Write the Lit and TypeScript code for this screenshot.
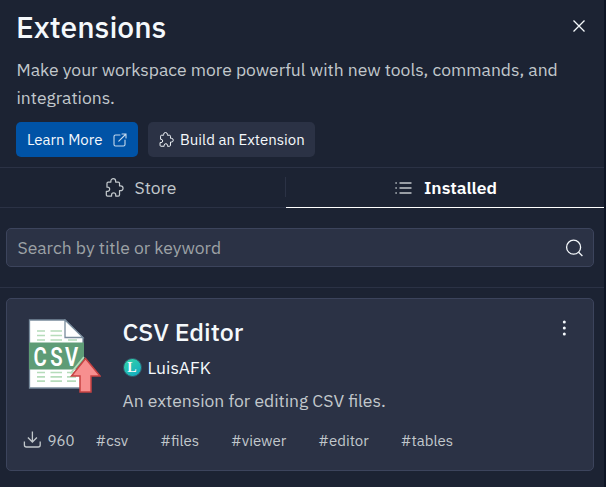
import { LitElement, html, css } from "lit";
import { customElement } from "lit/decorators.js";

const puzzle = (size: number) => html`<svg width=${size} height=${size} viewBox="0 0 20 20" fill="none" stroke="currentColor" stroke-width="1.3" stroke-linejoin="round">
  <path d="M3.400 4.300H6.200V3.200A2.500 2.500 0 0 1 11.200 3.200V4.300H14Q15.300 4.300 15.300 5.600V8.400H16.500A2.500 2.500 0 0 1 16.500 13.400H15.300V17.700Q15.300 19 14 19H11.300V17.800A2.200 2.200 0 0 0 6.900 17.800V19H2.700Q1.400 19 1.400 17.700V14.100H2.700A2.200 2.200 0 0 0 2.700 9.700H2.100V5.600Q2.100 4.300 3.400 4.300Z"/></svg>`;

@customElement("app-root")
export class AppRoot extends LitElement {
  static styles = css`
    :host { display: block; width: 606px; height: 487px; overflow: hidden; background: #0e1525; color: #f5f9fc;
      font-family: "IBM Plex Sans", Roboto, "Liberation Sans", sans-serif; }
    * { box-sizing: border-box; }
    svg { display: block; flex: none; }
    .panel { width: 604px; height: 487px; background: #1c2333; display: flex; flex-direction: column; }
    header { height: 167px; padding: 9px 16px 0; }
    .top { display: flex; justify-content: space-between; height: 47px; }
    h1 { margin: -1px 0 0; font-size: 30px; line-height: 38px; font-weight: 500; }
    .close { margin: 10px 2px 0 0; }
    .intro { margin: 0; padding-left: 0.500px; font-size: 17.500px; line-height: 28px; color: #c2c8cc; white-space: nowrap; }
    .actions { display: flex; gap: 10px; margin-top: 10px; }
    .btn { display: flex; align-items: center; height: 35px; border-radius: 5px; font-size: 15px; white-space: nowrap; padding: 0 11px; }
    .primary { width: 122px; background: #0053a6; justify-content: space-between; }
    .secondary { width: 167px; background: #2b3245; gap: 6px; }
    .btn span { position: relative; top: -0.500px; }
    .tabs { display: flex; height: 41px; border-top: 1px solid #2b3245; font-size: 17.500px; }
    .tab { display: flex; align-items: center; justify-content: center; gap: 11px; color: #c2c8cc; border-bottom: 1px solid #2b3245; }
    .store { width: 286px; padding-right: 5px; position: relative; }
    .store::after { content: ""; position: absolute; right: 0; top: 9px; width: 1px; height: 20px; background: #2b3245; }
    .installed { flex: 1; gap: 12px; padding-left: 2px; border-bottom-color: #fff; }
    .installed span { color: #fff; font-weight: 600; }
    .search-row { height: 80px; padding: 20px 10px 0 6px; border-bottom: 1px solid #2b3245; }
    .search { height: 39px; border: 1px solid #3c445c; border-radius: 5px; background: #2b3245; padding: 0 10px;
      display: flex; align-items: center; justify-content: space-between; font-size: 17.500px; }
    .search span { color: #9da2a6; padding-left: 0.500px; }
    .card { margin: 10px 10px 0 6px; height: 173px; border: 1px solid #3c445c; border-radius: 5px; background: #2b3245; padding: 20px 25px 0 16px; }
    .main { display: flex; height: 104px; }
    .file { margin-left: 5px; }
    .info { flex: 1; margin-left: 21.500px; }
    h2 { margin: -2px 0 0; font-size: 25px; line-height: 30px; font-weight: 500; }
    .author { display: flex; align-items: center; gap: 6px; height: 24px; margin-top: 8px; font-size: 17.500px; }
    .avatar { width: 19px; height: 19px; border-radius: 50%; background: linear-gradient(145deg, #35d6a5, #10a8c4); border: 1px solid #33606f;
      font: 700 14px/17px "Liberation Serif", serif; text-align: center; }
    .desc { margin: 8px 0 0; font-size: 17.500px; line-height: 28px; color: #c2c8cc; white-space: nowrap; }
    .meta { display: flex; align-items: center; height: 34px; font-size: 15px; color: #c2c8cc; }
    .count { margin-left: 6.500px; width: 48px; }
    .tags { display: flex; gap: 32px; }
  `;

  tags = ["csv", "files", "viewer", "editor", "tables"];

  render() {
    return html`<div class="panel">
      <header>
        <div class="top"><h1>Extensions</h1>
          <svg class="close" width="14" height="14" viewBox="0 0 14 14" stroke="#f5f9fc" stroke-width="1.300"><path d="M1.500 1.500l11 11M12.500 1.500l-11 11"/></svg></div>
        <p class="intro">Make your workspace more powerful with new tools, commands, and<br>integrations.</p>
        <div class="actions">
          <div class="btn primary"><span>Learn More</span>
            <svg width="14" height="14" viewBox="0 0 14 14" fill="none" stroke="#c5daed" stroke-width="1.100" stroke-linecap="round"><path d="M7 2H2.500Q1 2 1 3.500V11.500Q1 13 2.500 13H10.500Q12 13 12 11.500V7M9 1H13V5M13 1L5.800 8.200"/></svg></div>
          <div class="btn secondary">${puzzle(15)}<span>Build an Extension</span></div>
        </div>
      </header>
      <nav class="tabs">
        <div class="tab store">${puzzle(19)}<span>Store</span></div>
        <div class="tab installed">
          <svg width="17" height="14" viewBox="0 0 17 14" stroke="currentColor" stroke-width="1.300"><path d="M4.500 2H16.500M4.500 7H16.500M4.500 12H16.500M.4 2H1.800M.4 7H1.800M.4 12H1.800"/></svg>
          <span>Installed</span></div>
      </nav>
      <div class="search-row"><div class="search"><span>Search by title or keyword</span>
        <svg width="18" height="18" viewBox="0 0 18 18" fill="none" stroke="#f5f9fc" stroke-width="1.300"><circle cx="8.600" cy="8.200" r="7"/><path d="M13.600 13.200L17.400 17"/></svg></div></div>
      <article class="card">
        <div class="main">
          <svg class="file" width="73" height="74" viewBox="0 0 73 74">
            <path d="M1.500 1H37L55 19V69H1.500Z" fill="#fff" stroke="#788b9c" stroke-width="1.300"/>
            <path d="M9 12h8M22.500 12h11.500M9 16.500h8M22.500 16.500h11.500M9 21h8M22.500 21h11.500M40 21h9M9 53.500h8M22.500 53.500h11.500M39 53.500h9M9 57.800h8M22.500 57.800h11.500M39 57.800h9M9 62.200h8M22.500 62.200h11.500M39 62.200h9" stroke="#b5dcba" stroke-width="1.700"/>
            <path d="M37 1V18.500H55Z" fill="#fff" stroke="#788b9c" stroke-width="1.300"/>
            <rect x="1" y="23.500" width="55" height="27" fill="#5e9c76"/>
            <g transform="translate(0 46.500) scale(.78 1)" fill="#fff" font-family="Roboto" font-size="26" font-weight="600"><text x="7">C</text><text x="28.500">S</text><text x="47.500">V</text></g>
            <path d="M42.500 54.500L56 38" stroke="#b5dcba" stroke-width="1.800"/>
            <path d="M57.500 39.500L43.500 57H52V73H63V57H72Z" fill="#f78f8f" stroke="#c74343" stroke-width="1.500"/>
          </svg>
          <div class="info"><h2>CSV Editor</h2>
            <div class="author"><div class="avatar">L</div><span>LuisAFK</span></div>
            <p class="desc">An extension for editing CSV files.</p></div>
          <svg width="8" height="18" viewBox="0 0 8 18" fill="#f5f9fc"><circle cx="4.300" cy="3" r="1.500"/><circle cx="4.300" cy="9" r="1.500"/><circle cx="4.300" cy="15" r="1.500"/></svg>
        </div>
        <div class="meta">
          <svg width="18" height="18" viewBox="0 0 18 18" fill="none" stroke="currentColor" stroke-width="1.300"><path d="M9.400 .5V11M4.900 6.500L9.400 11L13.900 6.500M1.400 10.500V14Q1.400 16 3.400 16H15.200Q17.200 16 17.200 14V10.500"/></svg>
          <span class="count">960</span>
          <div class="tags">${this.tags.map((t) => html`<span>#${t}</span>`)}</div>
        </div>
      </article>
    </div>`;
  }
}
